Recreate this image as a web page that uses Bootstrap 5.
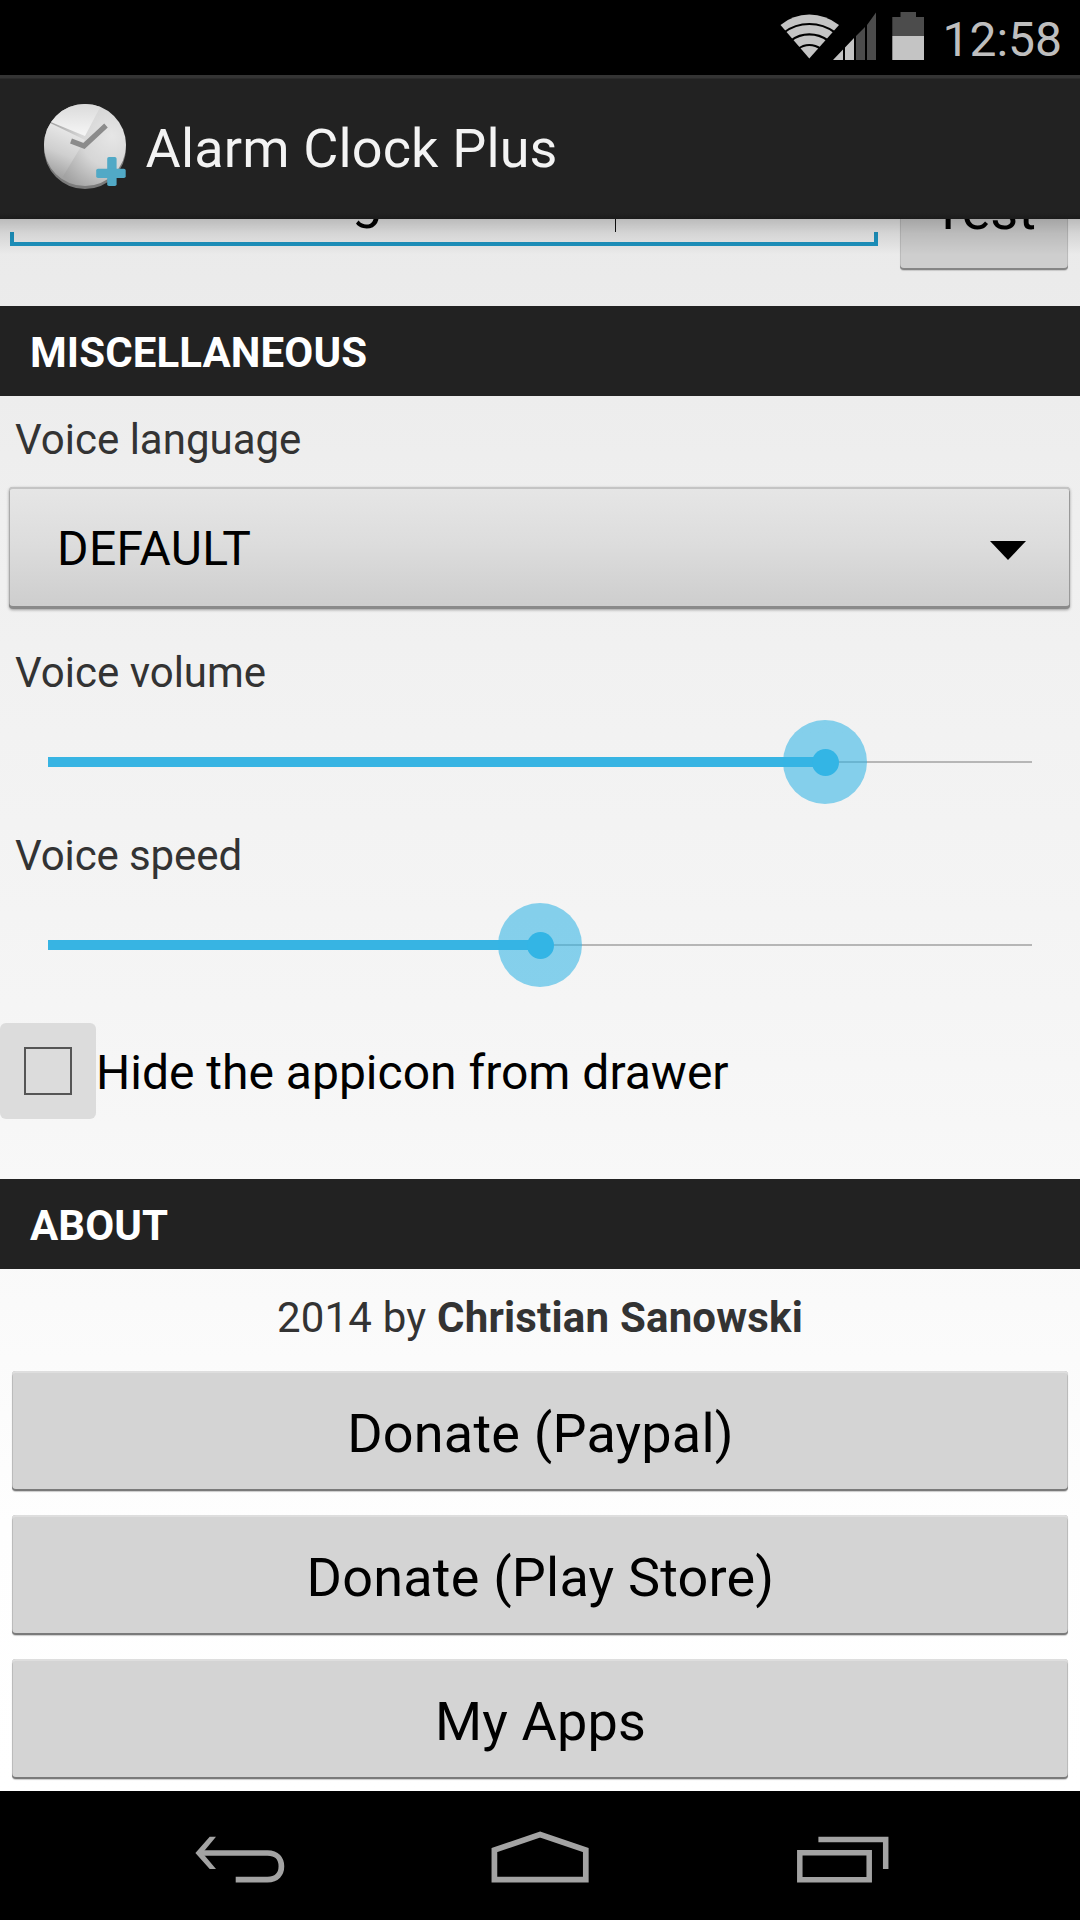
<!DOCTYPE html>
<html lang="en">
<head>
<meta charset="utf-8">
<meta name="viewport" content="width=device-width, initial-scale=1">
<title>Alarm Clock Plus</title>
<link href="https://cdn.jsdelivr.net/npm/bootstrap@5.3.0/dist/css/bootstrap.min.css" rel="stylesheet">
<style>
  body { font-family: Roboto, "Noto Sans", sans-serif; background: #000; line-height: 1; color: #333; }
  .phone { width: 1080px; height: 1920px; }
  .status-bar { height: 75px; padding: 4px 18px 0 0; font-size: 48px; color: #bebebe; }
  .status-bar svg { margin: -4px 16px 0 0; }
  .action-bar { height: 144px; background: linear-gradient(#343434 0 3px, #222 4px 138px, #1b1b1b); padding: 0 0 0 36px; font-size: 54px; color: #f3f3f3; }
  .action-bar h1 { font-size: inherit; font-weight: 400; letter-spacing: .15px; padding-top: 5px; margin: 0 0 0 9.5px; }
  .action-bar svg { margin-top: -2px; }
  .settings { height: 1572px; background: linear-gradient(#eaeaea, #eee 15%, #f1f1f1 27%, #f5f5f5 50%, #fafafa 69%, #fefefe 83%, #fff); }
  .settings::before { content: ""; position: absolute; inset: 0 0 auto 0; height: 36px; background: linear-gradient(rgba(0,0,0,.2), rgba(0,0,0,.09) 40%, transparent); z-index: 2; }
  .voice-row { height: 87px; padding: 0 12px 0 10px; }
  .voice-input { width: 868px; height: 27px; font-size: 54px; color: #000; }
  .voice-input::after { content: ""; position: absolute; inset: 13px 0 0 0; border: 4px solid #1d93bf; border-top: 0; }
  .voice-input .typed { padding-left: 342px; line-height: 54px; margin-top: -47px; height: 60px; }
  .voice-input .caret { width: 1px; height: 13px; background: #111; margin-left: 233px; }
  .test-btn { width: 168px; height: 51px; border-radius: 0 0 4px 4px; font-size: 54px; color: #000; background: #cecece; box-shadow: inset 0 -2px 0 #858585, inset 1px 0 #bbb, inset -1px 0 #bbb, 0 1px 1px rgba(0,0,0,.15); }
  .test-btn span { margin-top: -35px; line-height: 54px; }
  .section-head { height: 90px; margin: 0; padding: 5px 0 0 30px; background: #222; color: #fff; font-size: 42px; font-weight: 700; letter-spacing: .1px; }
  .field-label { font-size: 42px; padding-left: 15px; }
  .spinner-btn { height: 122px; margin: 0 10px 0 9px; padding: 1px 44px 0 48px; border: 0; border-radius: 4px; font-size: 48px; letter-spacing: .4px; color: #000;
    background: linear-gradient(#e6e6e6, #ddd 45%, #cdcdcd); box-shadow: inset 0 2px #c4c4c4, inset 0 -3px #8a8a8a, inset 1px 0 #aaa, inset -1px 0 #999, 0 1px 3px rgba(0,0,0,.35); }
  .spinner-btn svg { margin-top: 4px; }
  .slider { height: 84px; margin: 0 48px; }
  .slider .line { height: 2px; background: #b6b6b6; }
  .slider .filled { height: 10px; background: #37b4e3; }
  .slider .thumb { width: 84px; height: 84px; margin-left: -42px; border-radius: 50%; background: rgba(51,181,229,.58); }
  .slider .thumb i { width: 27px; height: 27px; border-radius: 50%; background: #33b5e5; }
  .hide-row { margin: 36px 0 60px; height: 96px; font-size: 48px; color: #000; }
  .tick-pad { width: 96px; height: 96px; border-radius: 6px; background: #dcdcdc; }
  .tick-pad i { width: 48px; height: 48px; border: 2px solid #555; }
  .credit { height: 102px; padding-bottom: 5px; font-size: 42px; letter-spacing: .2px; }
  .about-btn { height: 120px; border: 0; border-radius: 4px; font-size: 54px; letter-spacing: .2px; line-height: 1; color: #000; background: #d4d4d4; padding: 5px 0 0 1px;
    box-shadow: inset 0 2px #dedede, inset 0 -2px #7a7a7a, inset 1px 0 #bbb, inset -1px 0 #bbb, 0 1px 1px rgba(0,0,0,.2); }
  .nav-keys { height: 129px; padding: 0 187px 0 190px; }
  .nav-keys svg { overflow: visible; }
</style>
</head>
<body>
<div class="phone d-flex flex-column overflow-hidden">
  <header class="status-bar d-flex justify-content-end align-items-center flex-shrink-0">
    <svg width="148" height="75" viewBox="778 0 148 75" aria-hidden="true">
      <path fill="#c4c4c4" d="M809.3 58.5L780.5 25Q793 14.5 809.3 14.5T839 25Z"/>
      <g fill="none" stroke="#000" stroke-width="2.2">
        <path d="M784 32.5Q795 24 809.3 24T835 32.5"/>
        <path d="M791 40.5Q799 34.3 809.3 34.3T828 40.5"/>
        <path d="M798 49Q803 45 809.3 45T821 49"/>
      </g>
      <path fill="#c4c4c4" d="M833 60L843 49.5V60ZM845 47.5L854 38V60H845Z"/>
      <path fill="#4c4c4c" d="M856 36L865 27V60H856ZM867 25L876 12.5V60H867ZM892.3 17H900.5V12H916V17H924V36H892.3Z"/>
      <path fill="#c4c4c4" d="M892.3 36H924V60H892.3Z"/>
    </svg>
    <span>12:58</span>
  </header>

  <nav class="action-bar d-flex align-items-center flex-shrink-0">
    <svg width="100" height="100" viewBox="0 0 100 100" aria-hidden="true">
      <defs>
        <linearGradient id="shade" x1=".6" y1="0" x2=".3" y2="1"><stop offset="0" stop-color="#f2f2f2"/><stop offset=".5" stop-color="#cfcfcf"/><stop offset="1" stop-color="#868686"/></linearGradient>
        <linearGradient id="bright" x1="0" y1="0" x2="0" y2="1"><stop offset="0" stop-color="#d4d4d4"/><stop offset="1" stop-color="#f6f6f6"/></linearGradient>
        <radialGradient id="right" gradientUnits="userSpaceOnUse" cx="76" cy="40" r="62"><stop offset="0" stop-color="#e6e6e6"/><stop offset=".5" stop-color="#d6d6d6"/><stop offset="1" stop-color="#a2a2a2"/></radialGradient>
        <clipPath id="disc"><circle cx="49" cy="49" r="41"/></clipPath>
      </defs>
      <circle cx="49" cy="52" r="41" fill="#7b7b7b"/>
      <g clip-path="url(#disc)">
        <path fill="url(#right)" d="M0 0H100V100H0Z"/>
        <path fill="url(#shade)" d="M49 44L20 92H0V20Z"/>
        <path fill="url(#bright)" d="M49 40L0 20V0H70Z"/>
      </g>
      <path d="M35 45L48 50L70 29.5" fill="none" stroke="#8b8b8b" stroke-width="5.2"/>
      <rect x="71.2" y="61" width="9.4" height="29" rx="1.8" fill="#51a9c6"/>
      <rect x="60.2" y="72.8" width="29.5" height="9.2" rx="1.8" fill="#51a9c6"/>
    </svg>
    <h1>Alarm Clock Plus</h1>
  </nav>

  <main class="settings position-relative overflow-hidden d-flex flex-column flex-shrink-0">
    <div class="voice-row d-flex justify-content-between align-items-start flex-shrink-0">
      <div class="voice-input position-relative d-flex align-items-start">
        <span class="typed">g</span>
        <span class="caret"></span>
      </div>
      <div class="test-btn d-flex justify-content-center align-items-start"><span>Test</span></div>
    </div>

    <h2 class="section-head d-flex align-items-center flex-shrink-0">MISCELLANEOUS</h2>
    <div class="field-label d-flex align-items-center flex-shrink-0" style="height:91px;padding-bottom:4px">Voice language</div>
    <button type="button" class="spinner-btn d-flex align-items-center justify-content-between flex-shrink-0">
      <span>DEFAULT</span>
      <svg width="36" height="19" viewBox="0 0 36 19" aria-hidden="true"><path d="M0 0H36L18 19Z"/></svg>
    </button>

    <div class="field-label d-flex align-items-center flex-shrink-0" style="height:111px;padding-top:16px">Voice volume</div>
    <div class="slider d-flex align-items-center position-relative flex-shrink-0">
      <div class="filled" style="width:777px"></div><div class="line flex-fill"></div>
      <div class="thumb position-absolute d-flex align-items-center justify-content-center" style="left:777px"><i></i></div>
    </div>

    <div class="field-label d-flex align-items-center flex-shrink-0" style="height:99px;padding-top:4px;letter-spacing:-.1px">Voice speed</div>
    <div class="slider d-flex align-items-center position-relative flex-shrink-0">
      <div class="filled" style="width:492px"></div><div class="line flex-fill"></div>
      <div class="thumb position-absolute d-flex align-items-center justify-content-center" style="left:492px"><i></i></div>
    </div>

    <div class="hide-row d-flex align-items-center flex-shrink-0">
      <div class="tick-pad d-flex align-items-center justify-content-center"><i></i></div>
      <span class="pt-1">Hide the appicon from drawer</span>
    </div>

    <h2 class="section-head d-flex align-items-center flex-shrink-0">ABOUT</h2>
    <div class="credit d-flex align-items-center justify-content-center flex-shrink-0"><div>2014 by <strong>Christian Sanowski</strong></div></div>
    <div class="d-grid gap-4 mx-auto flex-shrink-0" style="width:1056px">
      <button type="button" class="about-btn">Donate (Paypal)</button>
      <button type="button" class="about-btn">Donate (Play Store)</button>
      <button type="button" class="about-btn">My Apps</button>
    </div>
  </main>

  <footer class="nav-keys bg-black d-flex justify-content-between align-items-start flex-shrink-0">
    <svg width="100" height="129" viewBox="190 1791 100 129" fill="none" stroke="#a3a3a3" stroke-width="5.7" aria-hidden="true">
      <path d="M201 1853H267.5C277 1853 281.4 1859 281.4 1866.3S277 1879.6 267.5 1879.6H235.7"/>
      <path fill="#a3a3a3" stroke="none" d="M195.4 1853L209.7 1836.7H216L202.5 1853L216 1869H209.7Z"/>
    </svg>
    <svg width="100" height="129" viewBox="491.5 1791 100 129" fill="none" stroke="#a3a3a3" stroke-width="5.7" aria-hidden="true">
      <path d="M493.9 1879.6V1850L539.6 1834.5L585.3 1850V1879.6Z"/>
    </svg>
    <svg width="100" height="129" viewBox="793 1791 100 129" fill="none" stroke="#a3a3a3" stroke-width="5.5" aria-hidden="true">
      <path d="M799.8 1852.7H869.2V1879.7H799.8ZM818.4 1839.4H885.7V1869"/>
    </svg>
  </footer>
</div>
<script src="https://cdn.jsdelivr.net/npm/bootstrap@5.3.0/dist/js/bootstrap.bundle.min.js"></script>
</body>
</html>
